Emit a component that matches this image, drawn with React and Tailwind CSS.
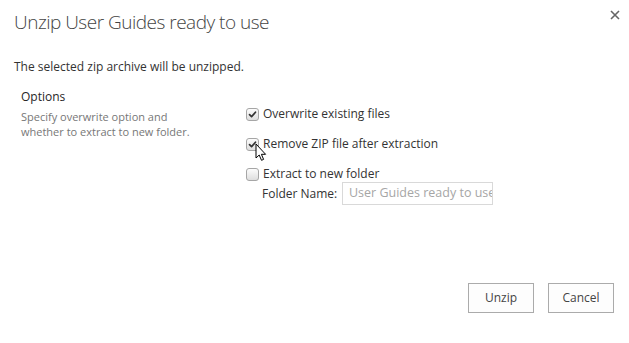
import React from "react";

function Check({ checked }) {
  return (
    <span className="relative inline-flex h-[13px] w-[13px] shrink-0 items-center justify-center rounded-[3px] border border-[#a6a6a6] bg-gradient-to-b from-[#fcfcfc] to-[#dedede]">
      {checked && (
        <svg viewBox="0 0 13 13" className="h-[13px] w-[13px]">
          <path d="M3 6.6 L5.4 9 L10 3.8" fill="none" stroke="#333" strokeWidth="2" strokeLinecap="round" strokeLinejoin="round" />
        </svg>
      )}
    </span>
  );
}

export default function App() {
  return (
    <div
      className="relative h-[343px] w-[629px] overflow-hidden bg-white text-[#333]"
      style={{ fontFamily: '"Open Sans", "Noto Sans", sans-serif' }}
    >
      <div className="flex items-start justify-between pl-[14px] pr-[9px] pt-[9px]">
        <h1 className="text-[19px] font-light leading-[26px] text-[#444] tracking-[-0.5px]">
          Unzip User Guides ready to use
        </h1>
        <svg viewBox="0 0 10 10" className="mt-[1px] h-[10px] w-[10px]">
          <path d="M1 1 L9 9 M9 1 L1 9" stroke="#666" strokeWidth="1.6" />
        </svg>
      </div>
      <p className="mt-[23px] pl-[14px] text-[12px] leading-[18px] text-[#333]">
        The selected zip archive will be unzipped.
      </p>
      <div className="mt-[12px] flex pl-[21px]">
        <div className="w-[225px] shrink-0">
          <div className="text-[12px] leading-[18px] text-[#262626]">Options</div>
          <div className="mt-[3px] w-[190px] text-[11px] leading-[15px] text-[#777]">
            Specify overwrite option and whether to extract to new folder.
          </div>
        </div>
        <div className="flex flex-col pt-[17px] text-[12px] text-[#333]">
          <label className="flex h-[18px] items-center gap-[4px]">
            <Check checked />
            <span>Overwrite existing files</span>
          </label>
          <label className="mt-[12px] flex h-[18px] items-center gap-[4px]">
            <Check checked />
            <span>Remove ZIP file after extraction</span>
          </label>
          <label className="mt-[12px] flex h-[18px] items-center gap-[4px]">
            <Check />
            <span>Extract to new folder</span>
          </label>
          <div className="mt-[-1px] flex items-center pl-[16px]">
            <span className="w-[80px]">Folder Name:</span>
            <div className="flex h-[23px] w-[151px] items-center overflow-hidden whitespace-nowrap border border-[#d9d9d9] pl-[6px] text-[12.5px] text-[#a6a6a6]">
              User Guides ready to use
            </div>
          </div>
        </div>
      </div>
      <div className="absolute bottom-[30px] right-[15px] flex gap-[14px]">
        <button className="h-[30px] w-[66px] border border-[#ababab] bg-[#fdfdfd] text-[12px] text-[#444]">
          Unzip
        </button>
        <button className="h-[30px] w-[66px] border border-[#ababab] bg-[#fdfdfd] text-[12px] text-[#444]">
          Cancel
        </button>
      </div>
      <svg
        viewBox="0 0 12 19"
        className="absolute left-[255px] top-[143px] h-[19px] w-[12px]"
      >
        <path d="M1 1 L1 15 L4.2 12 L6.5 17.3 L8.6 16.4 L6.4 11.3 L10.6 11.3 Z" fill="#fff" stroke="#000" strokeWidth="1" strokeLinejoin="round" />
      </svg>
    </div>
  );
}
